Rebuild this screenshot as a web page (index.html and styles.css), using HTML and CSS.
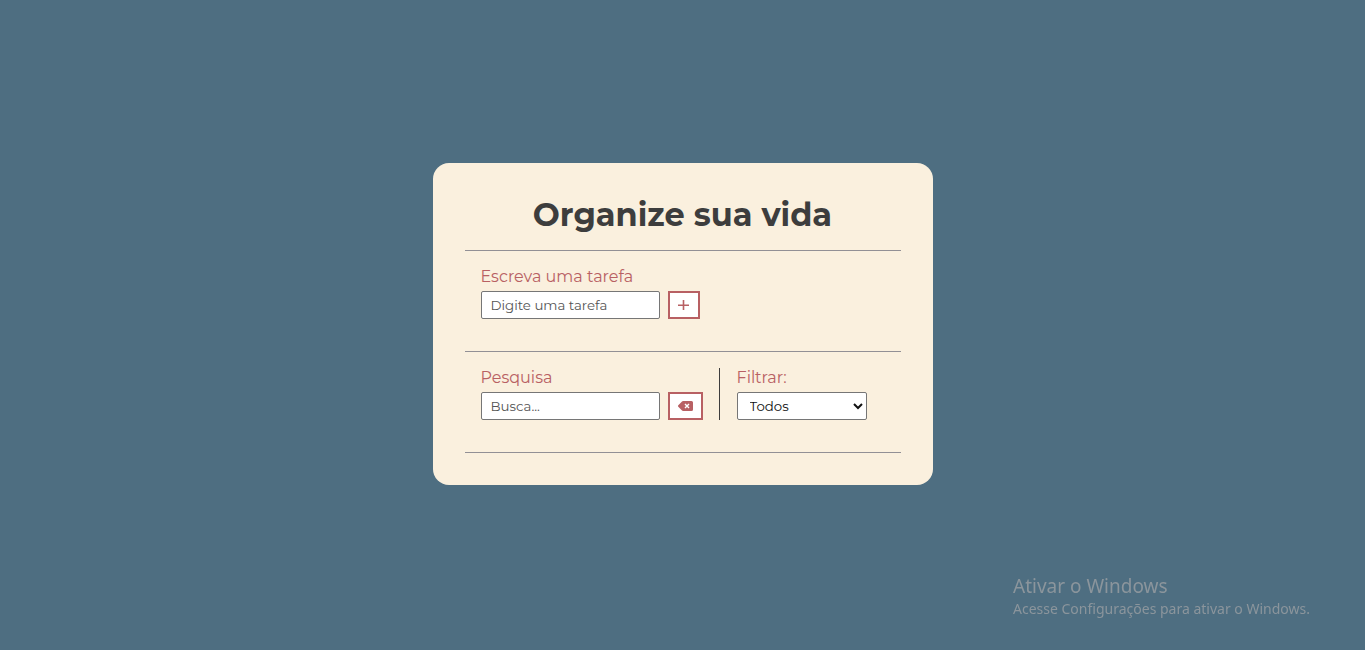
FILE: index.html
```html
<!DOCTYPE html>
<html lang="pt-BR">
<head>
<meta charset="UTF-8">
<meta name="viewport" content="width=device-width, initial-scale=1">
<title>Organize sua vida</title>
<link rel="stylesheet" href="styles.css">
</head>
<body>
<main class="todo">
  <header class="todo-header">
    <h1 class="title">Organize sua vida</h1>
  </header>
  <form class="section">
    <div class="field">
      <label class="label" for="task">Escreva uma tarefa</label>
      <div class="control">
        <input class="input" id="task" type="text" placeholder="Digite uma tarefa">
        <button class="button" type="submit" aria-label="Adicionar">
          <svg class="icon-plus" viewBox="0 0 12 12" aria-hidden="true"><path d="M5.500 1v10M0 6.200h11"/></svg>
        </button>
      </div>
    </div>
  </form>
  <div class="section toolbar">
    <form class="field">
      <label class="label" for="search">Pesquisa</label>
      <div class="control">
        <input class="input" id="search" type="text" placeholder="Busca...">
        <button class="button" type="button" aria-label="Apagar">
          <svg class="icon-erase" viewBox="0 0 15 10" aria-hidden="true"><path class="key" d="M5 0h8.500a1.500 1.500 0 0 1 1.500 1.500v7a1.500 1.500 0 0 1-1.500 1.500H5a1.500 1.500 0 0 1-1-.4L.3 5.700a1 1 0 0 1 0-1.400L4 .4A1.500 1.500 0 0 1 5 0z"/><path class="cross" d="M7 3l4 4M11 3l-4 4"/></svg>
        </button>
      </div>
    </form>
    <div class="field filter">
      <label class="label" for="filter">Filtrar:</label>
      <select class="select" id="filter">
        <option>Todos</option>
        <option>Feitos</option>
        <option>A fazer</option>
      </select>
    </div>
  </div>
</main>
<aside class="notice">
  <p class="notice-title">Ativar o Windows</p>
  <p class="notice-text">Acesse Configurações para ativar o Windows.</p>
</aside>
</body>
</html>
```
FILE: styles.css
```css
* {
  box-sizing: border-box;
  margin: 0;
  padding: 0;
}

body {
  min-height: 100vh;
  padding-bottom: 2px;
  display: flex;
  align-items: center;
  justify-content: center;
  background: #4e6e81;
  color: #3d3d3d;
  font-family: Montserrat, Inter, sans-serif;
}

.todo {
  width: 100%;
  max-width: 500px;
  padding: 32px;
  border-radius: 16px;
  background: #faf0de;
}

.todo-header {
  padding-bottom: 16px;
  border-bottom: 1px solid #929095;
}

.title {
  font-size: 32px;
  font-weight: 700;
  line-height: 39px;
  text-align: center;
}

.section {
  padding: 16px 16px 32px;
  border-bottom: 1px solid #929095;
}

.toolbar {
  display: flex;
  gap: 16px;
}

.field {
  display: flex;
  flex-direction: column;
  align-items: flex-start;
  gap: 4px;
}

.filter {
  padding-left: 17px;
  border-left: 1px solid #3d3d3d;
}

.label {
  color: #b86063;
  font-size: 16px;
  line-height: 20px;
}

.control {
  display: flex;
  gap: 8px;
}

.input,
.select {
  height: 28px;
  border: 1px solid #767676;
  border-radius: 2px;
  background: #fff;
  color: #111;
  font-family: inherit;
}

.input {
  width: 179px;
  padding: 4px 9px;
}

.input::placeholder {
  color: #555;
}

.select {
  width: 130px;
  padding: 4px 0 4px 8px;
}

.button {
  height: 28px;
  padding: 0 8px;
  display: flex;
  align-items: center;
  justify-content: center;
  border: 2px solid #b86063;
  background: #fff;
  color: #b86063;
  cursor: pointer;
}

.icon-plus {
  width: 12px;
  height: 12px;
  stroke: currentColor;
  stroke-width: 1.6;
}

.icon-erase {
  width: 15px;
  height: 10px;
}

.key {
  fill: currentColor;
}

.cross {
  stroke: #fff;
  stroke-width: 1.4;
}

.notice {
  position: fixed;
  right: 55px;
  bottom: 31px;
  color: #8b959c;
  font-family: "Segoe UI", "Noto Sans", sans-serif;
}

.notice-title {
  font-size: 19px;
  line-height: 26px;
}

.notice-text {
  font-size: 14px;
  line-height: 20px;
}
```
